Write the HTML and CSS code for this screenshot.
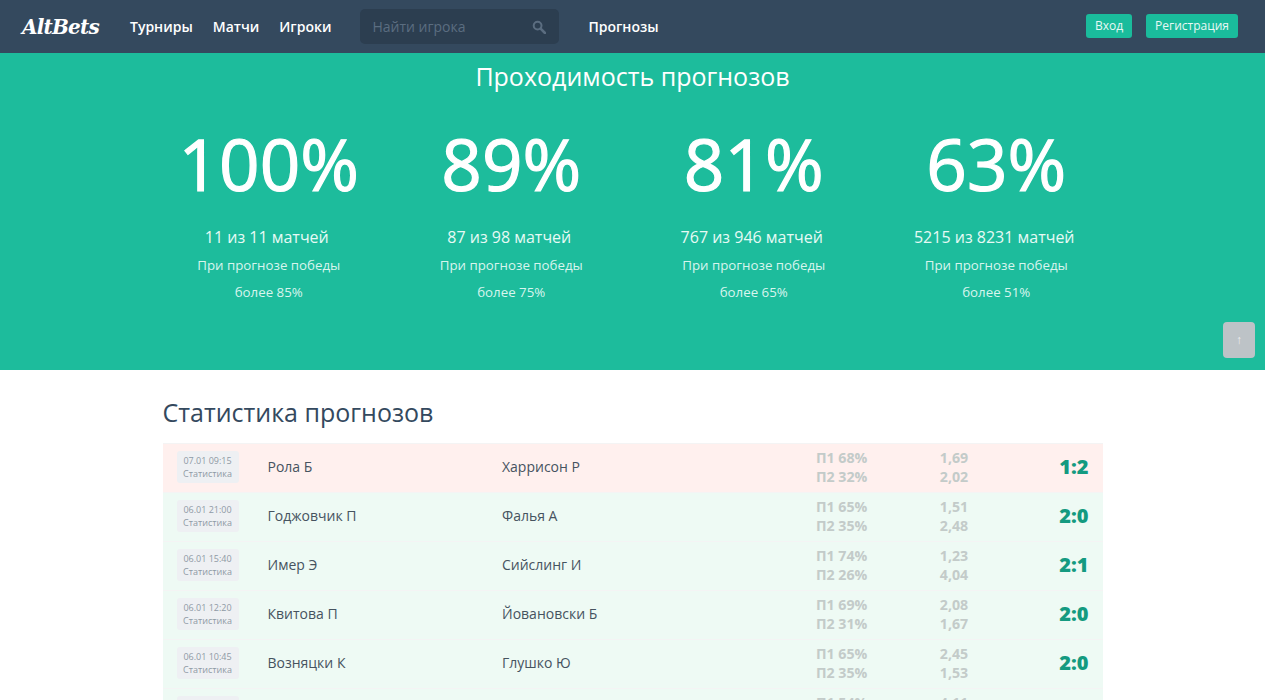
FILE: index.html
```html
<!DOCTYPE html>
<html lang="ru">
<head>
    <meta charset="UTF-8">
    <meta name="viewport" content="width=device-width, initial-scale=1.0">
    <title>AltBets</title>
    <link rel="stylesheet" href="styles.css">
</head>
<body>

<header class="navbar">
    <a class="logo" href="#">AltBets</a>
    <nav class="nav-links">
        <a href="#">Турниры</a>
        <a href="#">Матчи</a>
        <a href="#">Игроки</a>
    </nav>
    <div class="search">
        <span class="search-text">Найти игрока</span>
        <svg class="search-icon" width="14" height="14" viewBox="0 0 14 14">
            <circle cx="5.6" cy="5.6" r="3.9" fill="none" stroke="currentColor" stroke-width="2"/>
            <path d="M8.6 8.6L13 13" stroke="currentColor" stroke-width="2.6" stroke-linecap="round"/>
        </svg>
    </div>
    <a class="nav-single" href="#">Прогнозы</a>
    <div class="auth">
        <a class="btn btn-login" href="#">Вход</a>
        <a class="btn btn-register" href="#">Регистрация</a>
    </div>
</header>

<section class="hero">
    <h1>Проходимость прогнозов</h1>
    <div class="stats">
        <div class="stat">
            <div class="stat-value">100%</div>
            <div class="stat-count">11 из 11 матчей</div>
            <div class="stat-note">При прогнозе победы</div>
            <div class="stat-note">более 85%</div>
        </div>
        <div class="stat">
            <div class="stat-value">89%</div>
            <div class="stat-count">87 из 98 матчей</div>
            <div class="stat-note">При прогнозе победы</div>
            <div class="stat-note">более 75%</div>
        </div>
        <div class="stat">
            <div class="stat-value">81%</div>
            <div class="stat-count">767 из 946 матчей</div>
            <div class="stat-note">При прогнозе победы</div>
            <div class="stat-note">более 65%</div>
        </div>
        <div class="stat">
            <div class="stat-value">63%</div>
            <div class="stat-count">5215 из 8231 матчей</div>
            <div class="stat-note">При прогнозе победы</div>
            <div class="stat-note">более 51%</div>
        </div>
    </div>
    <a class="to-top" href="#">↑</a>
</section>

<main class="content">
    <h2>Статистика прогнозов</h2>
    <div class="matches">
        <div class="match lost">
            <div class="match-date">07.01 09:15<span>Статистика</span></div>
            <div class="player">Рола Б</div>
            <div class="player">Харрисон Р</div>
            <div class="chance">П1 68%<br>П2 32%</div>
            <div class="odds">1,69<br>2,02</div>
            <div class="score">1:2</div>
        </div>
        <div class="match won">
            <div class="match-date">06.01 21:00<span>Статистика</span></div>
            <div class="player">Годжовчик П</div>
            <div class="player">Фалья А</div>
            <div class="chance">П1 65%<br>П2 35%</div>
            <div class="odds">1,51<br>2,48</div>
            <div class="score">2:0</div>
        </div>
        <div class="match won">
            <div class="match-date">06.01 15:40<span>Статистика</span></div>
            <div class="player">Имер Э</div>
            <div class="player">Сийслинг И</div>
            <div class="chance">П1 74%<br>П2 26%</div>
            <div class="odds">1,23<br>4,04</div>
            <div class="score">2:1</div>
        </div>
        <div class="match won">
            <div class="match-date">06.01 12:20<span>Статистика</span></div>
            <div class="player">Квитова П</div>
            <div class="player">Йовановски Б</div>
            <div class="chance">П1 69%<br>П2 31%</div>
            <div class="odds">2,08<br>1,67</div>
            <div class="score">2:0</div>
        </div>
        <div class="match won">
            <div class="match-date">06.01 10:45<span>Статистика</span></div>
            <div class="player">Возняцки К</div>
            <div class="player">Глушко Ю</div>
            <div class="chance">П1 65%<br>П2 35%</div>
            <div class="odds">2,45<br>1,53</div>
            <div class="score">2:0</div>
        </div>
        <!-- последняя строка уходит за нижний край -->
        <div class="match won">
            <div class="match-date"></div>
            <div class="player"></div>
            <div class="player"></div>
            <div class="chance">П1 54%<br>&nbsp;</div>
            <div class="odds">4,11<br>&nbsp;</div>
            <div class="score"></div>
        </div>
    </div>
</main>

</body>
</html>
```

FILE: styles.css
```css
* {
    padding: 0;
    margin: 0;
    box-sizing: border-box;
}

html,
body {
    height: 700px;
    overflow: hidden;
}

body {
    font-family: "Open Sans", Arial, sans-serif;
    background-color: #fff;
    color: #34495e;
}

a {
    text-decoration: none;
}

.navbar {
    display: flex;
    align-items: center;
    height: 53px;
    padding: 0 27px 0 22px;
    background-color: #34495e;
}

.logo {
    width: 108px;
    font-family: "DejaVu Serif", serif;
    font-size: 20px;
    font-weight: 700;
    font-style: italic;
    letter-spacing: -0.8px;
    color: #fff;
}

.nav-links {
    display: flex;
    gap: 20px;
}

.nav-links a,
.nav-single {
    font-size: 14px;
    font-weight: 600;
    color: #fff;
}

.search {
    display: flex;
    align-items: center;
    justify-content: space-between;
    width: 199px;
    height: 35px;
    margin-left: 29px;
    padding: 0 13px 0 12px;
    background-color: #2c3e50;
    border-radius: 5px;
    color: #5b6d80;
}

.search-text {
    font-size: 14px;
}

.nav-single {
    margin-left: 29px;
}

.auth {
    display: flex;
    gap: 14px;
    margin-left: auto;
    margin-bottom: 2px;
}

.btn {
    height: 24px;
    padding: 0 9px;
    line-height: 24px;
    font-size: 12px;
    color: #e8f8f5;
    background-color: #1abc9c;
    border-radius: 3px;
}

.hero {
    position: relative;
    height: 317px;
    background-color: #1dbc9c;
    color: #fff;
    text-align: center;
}

.hero h1 {
    padding-top: 5px;
    font-size: 25px;
    font-weight: 400;
    line-height: 36px;
}

.stats {
    display: grid;
    grid-template-columns: repeat(4, 242.5px);
    justify-content: center;
    margin-top: 23px;
}

.stat-value {
    font-size: 71px;
    line-height: 94px;
    -webkit-text-stroke: 1.2px #fff;
}

.stat-count {
    margin-top: 13px;
    margin-bottom: 1px;
    padding-right: 4px;
    font-size: 16px;
    line-height: 27px;
    color: #e6faf5;
}

.stat-note {
    font-size: 13.3px;
    line-height: 27px;
    color: #d8f5ee;
}

.to-top {
    position: absolute;
    top: 269px;
    right: 10px;
    width: 32px;
    height: 36px;
    line-height: 36px;
    font-size: 12px;
    color: #eee;
    background-color: #bdc3c7;
    border-radius: 4px;
}

.content {
    width: 940px;
    margin: 0 auto;
}

.content h2 {
    padding-top: 24px;
    margin-bottom: 12px;
    font-size: 25px;
    font-weight: 400;
    line-height: 37px;
}

.match {
    display: grid;
    grid-template-columns: 105px 234.5px 314px 123px 62px 1fr;
    align-items: center;
    height: 49px;
    padding-bottom: 2px;
    border-top: 1px solid #f4f4f4;
}

.lost {
    background-color: #fff0ee;
}

.won {
    background-color: #eefaf4;
}

.match-date {
    justify-self: start;
    width: 62px;
    height: 32px;
    margin-left: 14px;
    padding-top: 3px;
    background-color: #eef0f3;
    border-radius: 3px;
    font-size: 9px;
    line-height: 13px;
    text-align: center;
    color: #8f9aa5;
}

.match-date span {
    display: block;
}

.player {
    padding-bottom: 2px;
    font-size: 14px;
    color: #46535f;
}

.chance,
.odds {
    font-size: 14.2px;
    font-weight: 700;
    line-height: 19px;
    color: #c3cbc9;
}

.odds {
    text-align: center;
    width: 30px;
}

.score {
    padding-right: 14px;
    padding-bottom: 2px;
    font-size: 20px;
    font-weight: 800;
    text-align: right;
    color: #149a80;
}
```
